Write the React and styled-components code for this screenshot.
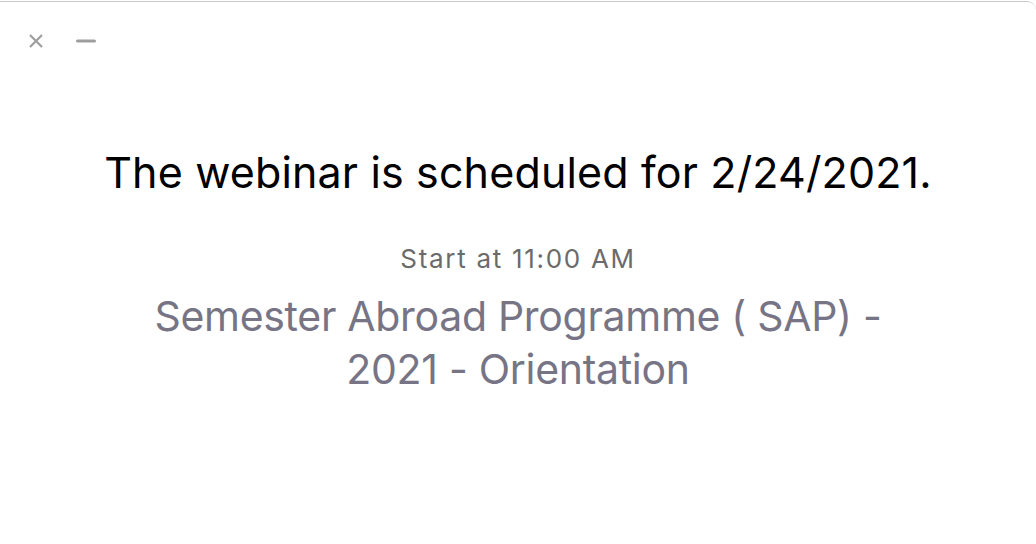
import React from "react";
import styled, { createGlobalStyle } from "styled-components";

const Global = createGlobalStyle`
  html, body { margin: 0; padding: 0; background: #ffffff; }
  body { font-family: Inter, "Noto Sans", sans-serif; }
`;

const Window = styled.div`
  box-sizing: border-box;
  width: 1036px;
  height: 544px;
  background: #ffffff;
  border-top: 1px solid #c9c9c9;
  border-top-right-radius: 9px;
  margin-top: 1px;
  display: flex;
  flex-direction: column;
`;

const TitleBar = styled.div`
  display: flex;
  align-items: center;
  gap: 30px;
  padding: 27px 0 0 26px;
  height: 24px;
`;

const Control = styled.button`
  border: none;
  background: none;
  padding: 0;
  width: 20px;
  height: 20px;
  display: flex;
  align-items: center;
  justify-content: center;
  cursor: pointer;
`;

const Content = styled.div`
  display: flex;
  flex-direction: column;
  align-items: center;
  text-align: center;
  padding-top: 94px;
`;

const Heading = styled.h1`
  margin: 0;
  font-size: 43px;
  font-weight: 400;
  color: #000000;
  line-height: 50px;
  letter-spacing: 0.15px;
`;

const StartTime = styled.div`
  margin-top: 47px;
  font-size: 26px;
  color: #6b6b6b;
  line-height: 30px;
  letter-spacing: 1.7px;
`;

const Topic = styled.div`
  margin-top: 16px;
  width: 760px;
  font-size: 41px;
  line-height: 53px;
  color: #767485;
  letter-spacing: -0.3px;
`;

export default function App() {
  return (
    <>
      <Global />
      <Window>
        <TitleBar>
          <Control aria-label="close">
            <svg width="16" height="16" viewBox="0 0 16 16">
              <path d="M2 2 L14 14 M14 2 L2 14" stroke="#9e9e9e" strokeWidth="2.2" strokeLinecap="butt" />
            </svg>
          </Control>
          <Control aria-label="minimize">
            <svg width="20" height="6" viewBox="0 0 20 6">
              <rect x="0" y="1.5" width="20" height="3" rx="1.5" fill="#9e9e9e" />
            </svg>
          </Control>
        </TitleBar>
        <Content>
          <Heading>The webinar is scheduled for 2/24/2021.</Heading>
          <StartTime>Start at 11:00 AM</StartTime>
          <Topic>Semester Abroad Programme ( SAP) - 2021 - Orientation</Topic>
        </Content>
      </Window>
    </>
  );
}
